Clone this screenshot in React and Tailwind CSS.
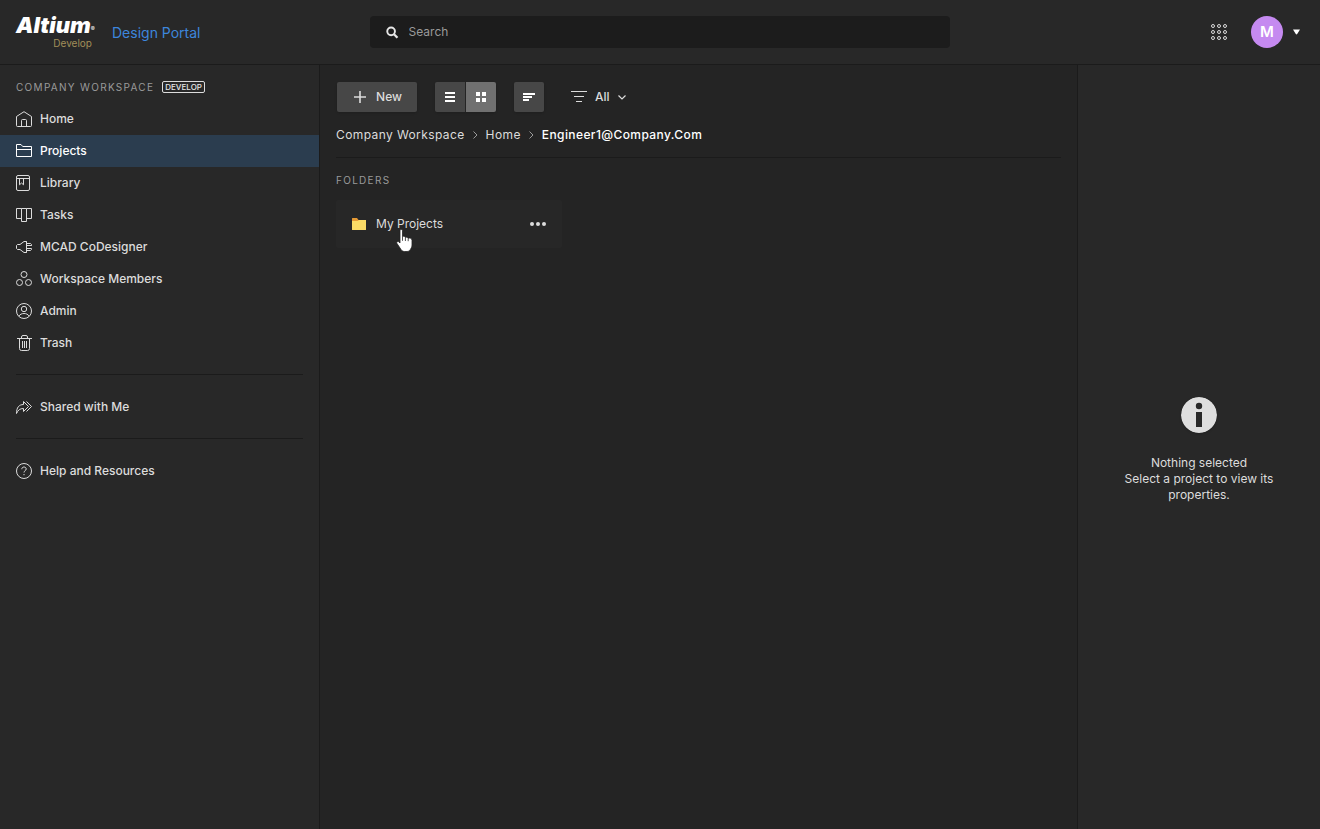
/**
 * Design Portal: projects page
 *
 * Header, workspace navigation, folder list and the properties panel.
 */

import React, { useState } from 'react';

const Icon = ({ children, size = 16, className = '' }) => (
  <svg
    width={size}
    height={size}
    viewBox="0 0 16 16"
    fill="none"
    stroke="currentColor"
    strokeWidth="1"
    className={`shrink-0 ${className}`}
    aria-hidden="true"
  >
    {children}
  </svg>
);

const icons = {
  home: (
    <>
      <path d="M.5 14.500V5.500L8 .7l7.500 4.800v9a1 1 0 0 1-1 1h-13a1 1 0 0 1-1-1z" />
      <path d="M5.500 15.500v-6a1 1 0 0 1 1-1h3a1 1 0 0 1 1 1v6" />
    </>
  ),
  projects: (
    <>
      <path d="M.5 13.500v-12H5l1.700 2h8.800v10H.5z" />
      <path d="M.5 6.500h15" />
    </>
  ),
  library: (
    <>
      <rect x=".5" y=".5" width="13" height="15" rx="1.500" />
      <path d="M.5 3.500h13M3.500 3.500v6.300l2-1.800 2 1.800V3.500" />
    </>
  ),
  tasks: (
    <path d="M5.500 1.500h-5v10h5M10.500 1.500h5v10h-5M5.500 1.500h5v13h-5z" />
  ),
  mcad: (
    <path d="M10.500 2.500H8L4 5.500H1.500l-1 1v3l1 1H4l4 3h2.500zM10.500 4.500h4l1 1v1h-5M10.500 9.500h5v1l-1 1h-4M10.500 2.500v11M12 6.500h3.500" />
  ),
  members: (
    <>
      <circle cx="8" cy="3.500" r="3" />
      <circle cx="3.500" cy="11.500" r="3" />
      <circle cx="12.500" cy="11.500" r="3" />
    </>
  ),
  admin: (
    <>
      <circle cx="8" cy="8" r="7.500" />
      <circle cx="8" cy="6" r="2.700" />
      <path d="M2.800 13.200c1.200-1.900 3-2.700 5.200-2.700s4 .8 5.200 2.700" />
    </>
  ),
  trash: (
    <>
      <path d="M1 3.500h15M5.500 3.500V2A1.500 1.500 0 0 1 7 .5h3A1.500 1.500 0 0 1 11.500 2v1.500" />
      <path d="M3.500 3.500v10a2 2 0 0 0 2 2h6a2 2 0 0 0 2-2v-10M6.500 6v7M8.500 6v7M10.500 6v7" />
    </>
  ),
  shared: (
    <path d="M.5 14.500C.5 8.500 3 5.500 7.500 5.500V2.500l5 5-5 5v-3C4 9.500 2 11 .5 14.500zM10.500 2.500l5 5-5 5" />
  ),
  help: (
    <>
      <circle cx="8" cy="8" r="7.500" />
      <path d="M5.800 6.200C5.800 4.800 6.700 4 8 4s2.200.8 2.200 2c0 1.700-2.200 1.700-2.200 3.500M8 11v1.200" />
    </>
  ),
};

const mainNav = [
  { id: 'home', label: 'Home' },
  { id: 'projects', label: 'Projects' },
  { id: 'library', label: 'Library' },
  { id: 'tasks', label: 'Tasks' },
  { id: 'mcad', label: 'MCAD CoDesigner' },
  { id: 'members', label: 'Workspace Members' },
  { id: 'admin', label: 'Admin' },
  { id: 'trash', label: 'Trash' },
];

function NavItem({ id, label, active, onSelect }) {
  return (
    <a
      href={`#${id}`}
      onClick={() => onSelect(id)}
      className={`flex h-8 items-center gap-2 px-4 text-[12px] font-medium ${
        active ? 'bg-[#2b3d4f] text-white' : 'text-[#dcdcdc]'
      }`}
    >
      <Icon>{icons[id]}</Icon>
      {label}
    </a>
  );
}

function Header() {
  return (
    <header className="grid h-[65px] shrink-0 grid-cols-[1fr_minmax(0,580px)_1fr] items-center border-b border-[#1b1b1b] bg-[#282828]">
      <div className="flex items-center gap-4 pl-4">
        <a href="#portal" className="flex w-20 flex-col pb-[3px]" aria-label="Altium Develop">
          <span className="flex items-end text-[22px] leading-6 font-black text-white italic">
            Altium
            <span className="text-[6px] leading-4 font-normal not-italic">®</span>
          </span>
          <span className="pr-1 text-right text-[10px] leading-3 text-[#a18e58]">Develop</span>
        </a>
        <a href="#portal" className="text-[14px] text-[#3d86dc]">Design Portal</a>
      </div>

      <label className="flex h-8 items-center gap-2 rounded bg-[#1c1c1c] px-4">
        <svg width="13" height="13" viewBox="0 0 13 13" fill="none" stroke="#e6e6e6" strokeWidth="2" aria-hidden="true">
          <circle cx="5.300" cy="5.300" r="4" />
          <path d="M8.300 8.300l3.600 3.600" strokeWidth="2.400" />
        </svg>
        <input
          type="search"
          aria-label="Search"
          placeholder="Search"
          className="w-full bg-transparent pl-[2px] text-[12px] text-white outline-none placeholder:text-[#9a9a9a]"
        />
      </label>

      <div className="flex items-center justify-end pr-5">
        <button type="button" aria-label="Apps" className="mr-6 text-[#dcdcdc]">
          <Icon>
            {[2, 8, 14].map(y => [2, 8, 14].map(x => (
              <circle key={`${x}-${y}`} cx={x} cy={y} r="1.500" />
            )))}
          </Icon>
        </button>
        <button type="button" aria-label="Account" className="flex items-center gap-[10px]">
          <span className="flex size-8 items-center justify-center rounded-full bg-[#c58af0] text-[15px] font-semibold text-white">
            M
          </span>
          <svg width="7" height="6" viewBox="0 0 7 6" fill="#fff" aria-hidden="true">
            <path d="M0 .5h7L4.200 5a.8.8 0 0 1-1.400 0z" />
          </svg>
        </button>
      </div>
    </header>
  );
}

function Sidebar() {
  const [active, setActive] = useState('projects');

  return (
    <aside className="w-80 shrink-0 border-r border-[#1b1b1b] bg-[#282828] pt-[6px]">
      <div className="flex h-8 items-center gap-2 px-4">
        <h2 className="text-[10px] tracking-[1.3px] text-[#9a9a9a]">COMPANY WORKSPACE</h2>
        <span className="rounded-xs border border-[#dcdcdc] px-[2px] text-[8px] leading-[10px] font-medium text-[#e6e6e6]">
          DEVELOP
        </span>
      </div>
      <nav>
        {mainNav.map(item => (
          <NavItem key={item.id} {...item} active={item.id === active} onSelect={setActive} />
        ))}
        <hr className="mx-4 mt-[15px] mb-4 border-[#1b1b1b]" />
        <NavItem id="shared" label="Shared with Me" active={active === 'shared'} onSelect={setActive} />
        <hr className="mx-4 mt-[15px] mb-4 border-[#1b1b1b]" />
        <NavItem id="help" label="Help and Resources" active={active === 'help'} onSelect={setActive} />
      </nav>
    </aside>
  );
}

function Toolbar() {
  const [view, setView] = useState('grid');

  return (
    <div className="flex h-8 items-center px-px">
      <button
        type="button"
        className="mr-[18px] flex h-[30px] w-20 items-center justify-center gap-[9px] rounded-xs bg-[#474747] pl-px text-[12px] font-medium text-[#dcdcdc] shadow"
      >
        <svg width="14" height="14" viewBox="0 0 14 14" stroke="currentColor" strokeWidth="1.600" aria-hidden="true">
          <path d="M7 1v12M1 7h12" />
        </svg>
        New
      </button>

      <div className="mr-[18px] flex gap-px overflow-hidden rounded-xs shadow">
        <button
          type="button"
          aria-label="List view"
          onClick={() => setView('list')}
          className={`flex h-[30px] w-[30px] items-center justify-center ${view === 'list' ? 'bg-[#707070]' : 'bg-[#474747]'}`}
        >
          <svg width="10" height="10" viewBox="0 0 10 10" fill="#fff" aria-hidden="true">
            <path d="M0 0h10v2H0zM0 4h10v2H0zM0 8h10v2H0z" />
          </svg>
        </button>
        <button
          type="button"
          aria-label="Grid view"
          onClick={() => setView('grid')}
          className={`flex h-[30px] w-[30px] items-center justify-center ${view === 'grid' ? 'bg-[#707070]' : 'bg-[#474747]'}`}
        >
          <svg width="10" height="10" viewBox="0 0 10 10" fill="#fff" aria-hidden="true">
            <path d="M0 0h4v4H0zM6 0h4v4H6zM0 6h4v4H0zM6 6h4v4H6z" />
          </svg>
        </button>
      </div>

      <button
        type="button"
        aria-label="Sort"
        className="mr-[27px] flex h-[30px] w-[30px] items-center justify-center rounded-xs bg-[#474747] shadow"
      >
        <svg width="12" height="8" viewBox="0 0 12 8" fill="#fff" aria-hidden="true">
          <path d="M0 0h12v2H0zM0 3h9v2H0zM0 6h6v2H0z" />
        </svg>
      </button>

      <button type="button" className="flex items-center gap-2 text-[12px] font-medium text-[#dcdcdc]">
        <svg width="16" height="12" viewBox="0 0 16 12" stroke="currentColor" aria-hidden="true">
          <path d="M0 .5h16M3 5.500h10M5 10.500h6" />
        </svg>
        All
        <svg width="8" height="5" viewBox="0 0 8 5" fill="none" stroke="currentColor" strokeWidth="1.200" aria-hidden="true">
          <path d="M.5 .5L4 4 7.500 .5" />
        </svg>
      </button>
    </div>
  );
}

function Chevron() {
  return (
    <svg width="5" height="8" viewBox="0 0 5 8" fill="none" stroke="#9a9a9a" aria-hidden="true">
      <path d="M.5 .5L4 4 .5 7.500" />
    </svg>
  );
}

function FolderCard({ name }) {
  return (
    <div className="relative flex h-12 w-[226px] items-center rounded-xs bg-[#272727] pr-4 pl-[15px]">
      <svg width="16" height="14" viewBox="0 0 16 14" aria-hidden="true">
        <path d="M1 1.500A.5.500 0 0 1 1.500 1H6l1.500 2H15v4H1z" fill="#e59a35" />
        <path d="M1 4h5.500L8 3h7v9.500a.5.500 0 0 1-.5.500h-13a.5.500 0 0 1-.5-.5z" fill="#fadb66" />
      </svg>
      <a href="#my-projects" className="ml-[9px] flex-1 text-[12px] text-[#dcdcdc]">{name}</a>
      <button type="button" aria-label="More actions">
        <svg width="16" height="4" viewBox="0 0 16 4" fill="#dcdcdc" aria-hidden="true">
          <circle cx="2" cy="2" r="2" />
          <circle cx="8" cy="2" r="2" />
          <circle cx="14" cy="2" r="2" />
        </svg>
      </button>

      {/* Hand pointer over the folder name */}
      <svg
        className="pointer-events-none absolute top-[29px] left-[60px]"
        width="18"
        height="24"
        viewBox="0 0 18 24"
        fill="#fff"
        stroke="#242424"
        strokeWidth=".8"
        aria-hidden="true"
      >
        <path d="M4 1.500C4 .2 6.500.2 6.500 1.500v6c1-.4 2.500-.2 2.800.8 1-.4 2.500-.1 2.800.9 1.600-.4 3.900.2 3.900 1.900v5c0 2-1 3.200-1.600 4.300-.7 1.500-1.900 2.100-3.400 2.100H8.500c-1.400 0-2.500-.6-3.300-1.700L1 14.500c-.8-1.600.6-2.700 1.800-1.700L4 14z" />
        <path d="M6.500 7.500v4.300M9.400 8.300v3.700M12.200 9.200v3" />
      </svg>
    </div>
  );
}

function Properties() {
  return (
    <aside className="flex w-[243px] shrink-0 flex-col items-center justify-center border-l border-[#1b1b1b] bg-[#282828] px-10 pt-[6px] text-center text-[12px] leading-4 text-[#dcdcdc]">
      <svg width="36" height="36" viewBox="0 0 36 36" className="mb-[22px] rounded-full shadow" aria-hidden="true">
        <circle cx="18" cy="18" r="18" fill="#dedede" />
        <circle cx="18" cy="9" r="3.200" fill="#282828" />
        <path d="M15 15h6v15h-6z" fill="#282828" />
      </svg>
      <p>Nothing selected</p>
      <p>Select a project to view its properties.</p>
    </aside>
  );
}

export default function App() {
  return (
    <div className="flex min-h-screen flex-col bg-[#242424] font-['Inter',sans-serif]">
      <Header />
      <div className="flex flex-1">
        <Sidebar />
        <main className="min-w-0 flex-1 px-4 pt-4">
          <Toolbar />
          <nav
            aria-label="Breadcrumb"
            className="mt-3 flex items-center gap-2 text-[12px] leading-5 tracking-[.4px] text-[#dcdcdc]"
          >
            <a href="#workspace">Company Workspace</a>
            <Chevron />
            <a href="#home">Home</a>
            <Chevron />
            <span className="font-medium text-white">Engineer1@Company.Com</span>
          </nav>
          <hr className="mt-3 border-[#1b1b1b]" />
          <h3 className="mt-[14px] mb-3 text-[10px] leading-4 tracking-[1.3px] text-[#9a9a9a]">FOLDERS</h3>
          <FolderCard name="My Projects" />
        </main>
        <Properties />
      </div>
    </div>
  );
}
